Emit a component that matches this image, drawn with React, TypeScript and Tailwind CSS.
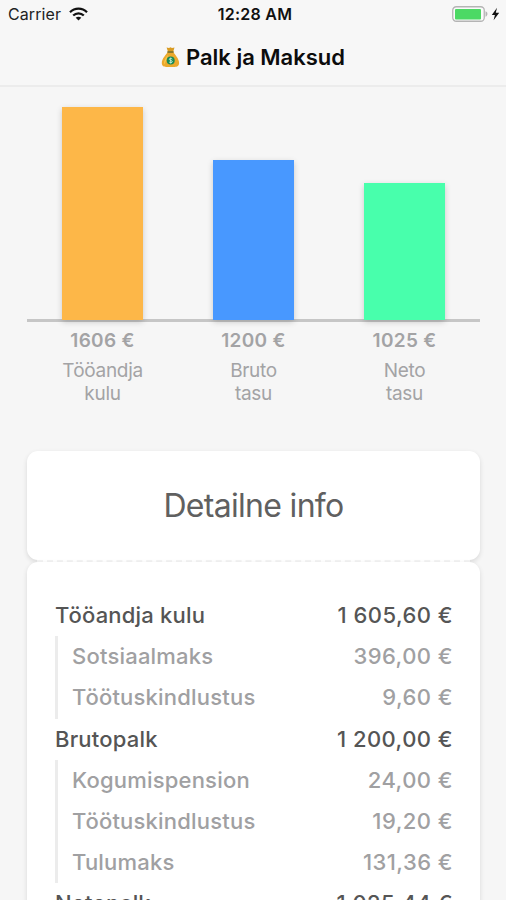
type Bar = { amount: string; label: string[]; height: number; color: string };
type Row = { label: string; value: string };
type Group = Row & { items: Row[] };

const bars: Bar[] = [
  { amount: "1606 €", label: ["Tööandja", "kulu"], height: 213, color: "bg-[#fdb748]" },
  { amount: "1200 €", label: ["Bruto", "tasu"], height: 160, color: "bg-[#4898ff]" },
  { amount: "1025 €", label: ["Neto", "tasu"], height: 137, color: "bg-[#48ffac]" },
];

const groups: Group[] = [
  {
    label: "Tööandja kulu",
    value: "1 605,60 €",
    items: [
      { label: "Sotsiaalmaks", value: "396,00 €" },
      { label: "Töötuskindlustus", value: "9,60 €" },
    ],
  },
  {
    label: "Brutopalk",
    value: "1 200,00 €",
    items: [
      { label: "Kogumispension", value: "24,00 €" },
      { label: "Töötuskindlustus", value: "19,20 €" },
      { label: "Tulumaks", value: "131,36 €" },
    ],
  },
  { label: "Netopalk", value: "1 025,44 €", items: [] },
];

function WifiIcon() {
  return (
    <svg width="19" height="14" viewBox="0 0 19 14" fill="none" stroke="#111" strokeWidth="2.3">
      <path d="M1 5.2C5.8.5 13.2.5 18 5.2" />
      <path d="M4.2 8.5c3-2.9 7.6-2.9 10.6 0" />
      <path d="M9.5 13.6 6.7 10.8c1.6-1.5 4-1.5 5.6 0z" fill="#111" stroke="none" />
    </svg>
  );
}

function BatteryIcon() {
  return (
    <svg width="48" height="16" viewBox="0 0 48 16">
      <rect x="0.75" y="0.75" width="31.5" height="14.5" rx="3.5" fill="#fafafa" stroke="#b4b4b4" strokeWidth="1.3" />
      <rect x="3" y="3" width="26" height="10.5" rx="1" fill="#4cd964" />
      <path d="M33.5 5.300c2.600.8 2.600 4.600 0 5.400z" fill="#b4b4b4" />
      <path d="M45 1.800 39.800 8.900h3.100l-1.300 5.300 5.600-7.500h-3.400z" fill="#111" />
    </svg>
  );
}

function MoneyBag() {
  return (
    <svg width="19" height="22" viewBox="0 0 19 22">
      <path d="M5.6 1.4 8 2l1.5-.7L11 2l2.5-.6-1.3 4.4H7z" fill="#d99b22" />
      <path d="M6.7 6h5.6c1.2 2.5 5.8 6.3 5.8 11 0 3-1.9 3.900-4.300 3.900H5.200C2.700 20.900.8 20 .8 17 .8 12.300 5.500 8.500 6.700 6z" fill="#eba92c" />
      <path d="M3.400 18.500c-1.200-3 1.600-7.500 3.600-9.500-.8 3.500-2.400 6.500-3.600 9.500z" fill="#f8c84e" />
      <rect x="6.200" y="5" width="6.600" height="1.900" rx=".9" fill="#8d7a2a" />
      <circle cx="9.700" cy="14.600" r="4" fill="#178a55" />
      <path d="M11.300 13c-.7-1-3-.9-3 .3 0 1.400 3 .9 3 2.400 0 1.200-2.500 1.300-3.200.2M9.700 11.700v5.800" fill="none" stroke="#c8f0da" strokeWidth=".9" />
    </svg>
  );
}

function StatusBar() {
  return (
    <div className="grid h-7 grid-cols-3 items-center pr-1.5 pl-2 text-[16px] text-[#222]">
      <div className="flex items-center gap-2">
        <span className="tracking-[0.1px]">Carrier</span>
        <WifiIcon />
      </div>
      <div className="pl-0.5 text-center font-semibold tracking-[0.25px] whitespace-nowrap text-[#111]">12:28 AM</div>
      <div className="flex justify-end">
        <BatteryIcon />
      </div>
    </div>
  );
}

function BarChart() {
  return (
    <section className="mx-[27px] w-[453px] pt-[20px]">
      <div className="grid h-[212px] grid-cols-3 items-end justify-items-center">
        {bars.map((bar) => (
          <div
            key={bar.amount}
            className={`relative w-[81px] shadow-[0_2px_6px_rgba(0,0,0,0.18)] ${bar.color}`}
            style={{ height: bar.height }}
          />
        ))}
      </div>
      <div className="h-[3px] bg-[#c6c6c6]" />
      <div className="grid grid-cols-3 text-center text-[#a3a3a5]">
        {bars.map((bar) => (
          <div key={bar.amount}>
            <p className="pt-[7px] text-[19px] leading-[24px] font-semibold tracking-[0.3px]">{bar.amount}</p>
            <p className="pt-[6px] text-[19px] leading-[23px] tracking-[-0.3px]">
              {bar.label[0]}
              <br />
              {bar.label[1]}
            </p>
          </div>
        ))}
      </div>
    </section>
  );
}

function InfoRow({ label, value }: Row) {
  return (
    <div className="flex h-[41.2px] items-center justify-between">
      <span className="tracking-[0.2px]">{label}</span>
      <span className="-mr-px tracking-[0.45px]">{value}</span>
    </div>
  );
}

export default function App() {
  return (
    <div className="h-[900px] w-[506px] overflow-hidden bg-[#f6f6f6] font-['Inter','Liberation_Sans',sans-serif]">
      <header className="h-[87px] border-b-2 border-[#ececec] bg-[#f7f7f7]">
        <StatusBar />
        <h1 className="flex h-[58px] items-center justify-center gap-[6px] text-[22px] font-semibold text-[#0c0c0c]">
          <MoneyBag />
          Palk ja Maksud
        </h1>
      </header>

      <BarChart />

      <section className="mx-[27px] mt-[46px] w-[453px]">
        <div className="flex h-[109px] items-center justify-center rounded-[11px] bg-white text-[32px] tracking-[-0.7px] text-[#606060] shadow-[0_2px_5px_rgba(0,0,0,0.12)]">
          Detailne info
        </div>
        <div className="mx-[10px] border-t-2 border-dashed border-[#f3f3f3] bg-white" />
        <div className="rounded-[11px] bg-white px-7 pt-[33px] pb-10 text-[22px] font-medium text-[#a0a0a2] shadow-[0_2px_5px_rgba(0,0,0,0.12)]">
          {groups.map((group) => (
            <div key={group.label}>
              <div className="text-[#555]">
                <InfoRow label={group.label} value={group.value} />
              </div>
              <div className="border-l-[3px] border-[#ececec] pl-[14px]">
                {group.items.map((item) => (
                  <InfoRow key={item.label} {...item} />
                ))}
              </div>
            </div>
          ))}
        </div>
      </section>
    </div>
  );
}
